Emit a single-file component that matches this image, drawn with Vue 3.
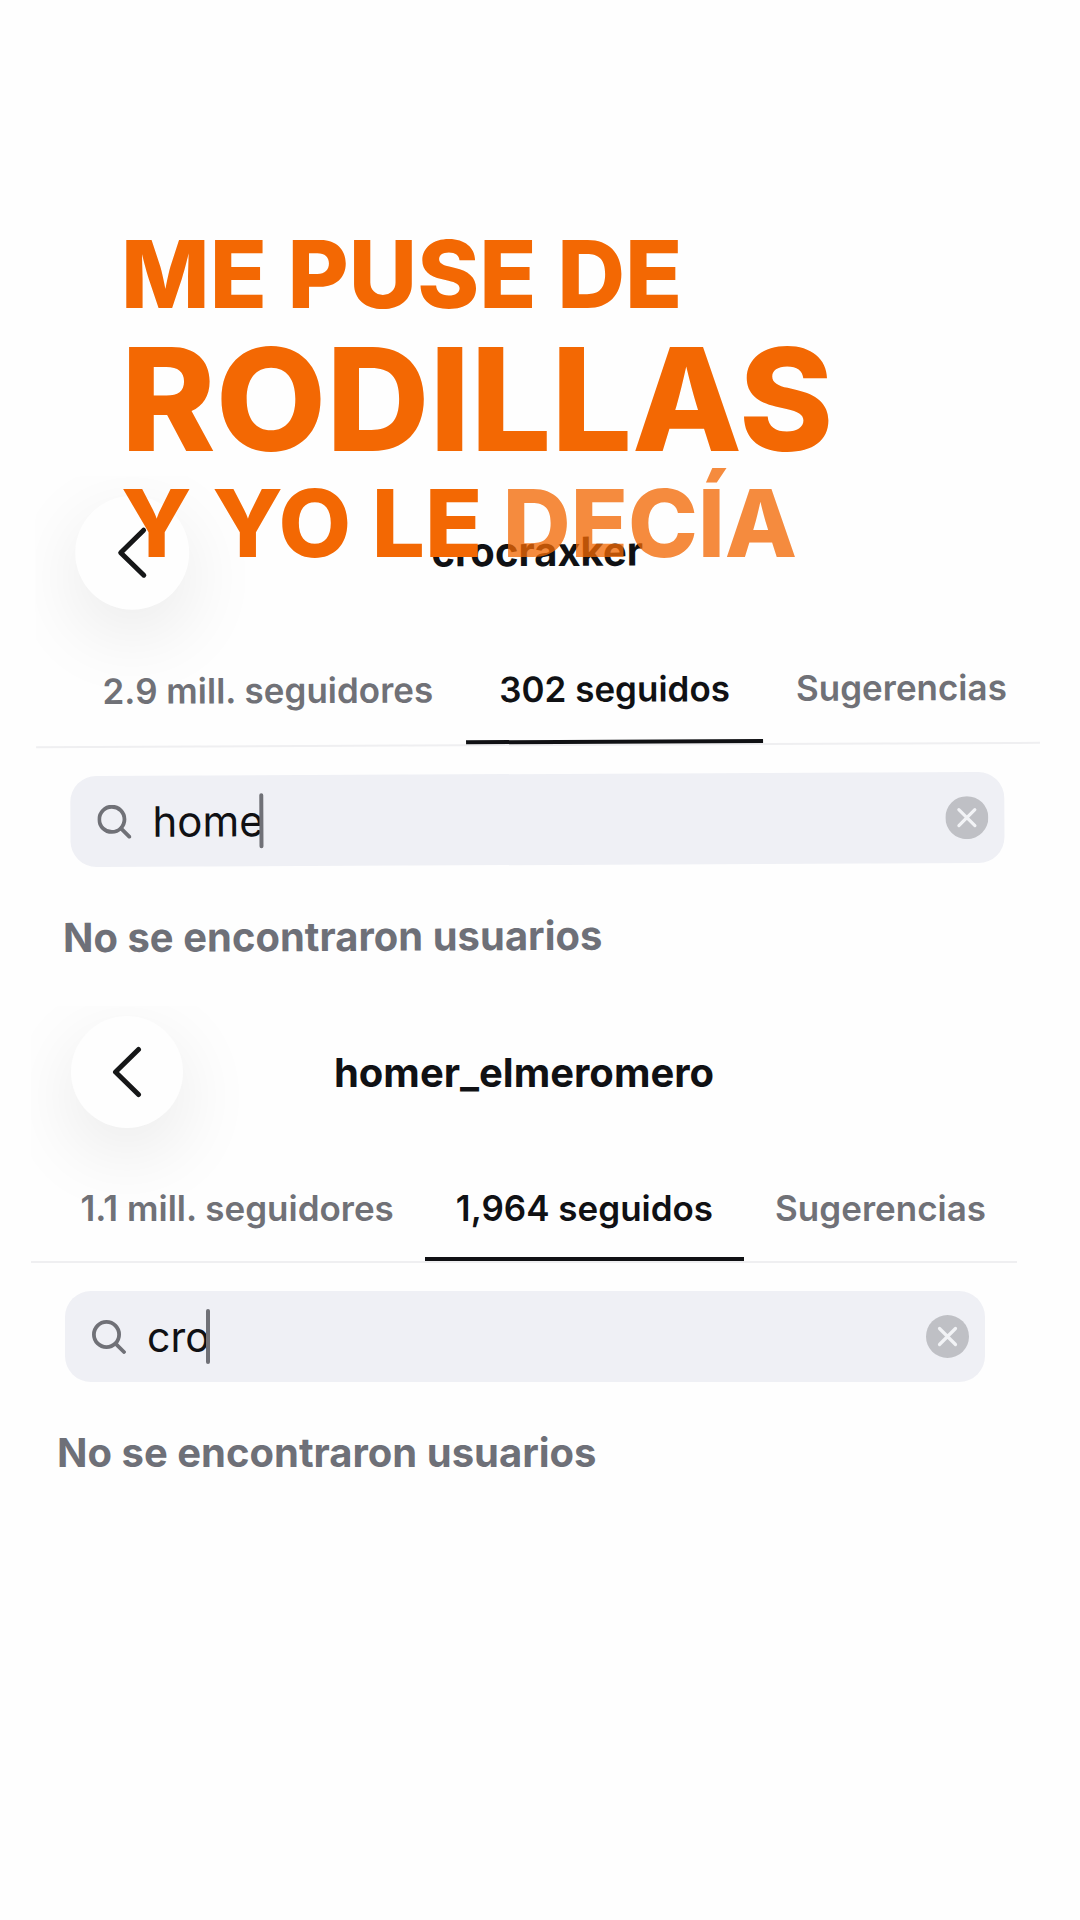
<template>
    <main class="page">
        <h1 class="caption">
            <span class="caption-line">ME PUSE DE</span>
            <span class="caption-line big">RODILLAS</span>
            <span class="caption-line">Y YO LE <span class="fading">DECÍA</span></span>
        </h1>

        <section v-for="profile in profiles" :key="profile.name" :class="['profile', profile.variant]">
            <header class="profile-header">
                <button class="back" type="button" aria-label="Atrás">
                    <svg class="back-icon" viewBox="0 0 30 52" fill="none" stroke="#161718" stroke-width="5"
                        stroke-linecap="round" stroke-linejoin="round">
                        <path d="M26.500 3.500 L3.500 26 L26.500 48.500" />
                    </svg>
                </button>
                <h2 class="name">{{ profile.name }}</h2>
            </header>

            <nav class="tabs">
                <button v-for="tab in profile.tabs" :key="tab" type="button"
                    :class="['tab', { active: profile.active === tab }]" @click="profile.active = tab">
                    {{ tab }}
                </button>
            </nav>

            <div class="search">
                <label class="search-label">
                    <svg class="search-icon" viewBox="0 0 34 34" fill="none" stroke="#707177" stroke-width="3.8"
                        stroke-linecap="round">
                        <circle cx="14.500" cy="14.500" r="12.600" />
                        <path d="M23.800 23.800 L32 32" />
                    </svg>
                    <input v-model="profile.query" class="search-input" type="text" aria-label="Buscar" />
                    <span class="caret" />
                </label>
                <button class="clear" type="button" aria-label="Borrar" @click="profile.query = ''">
                    <svg class="clear-icon" viewBox="0 0 43 43" fill="none">
                        <circle cx="21.500" cy="21.500" r="21.500" fill="#bfc0c5" />
                        <path d="M13.500 13.500 L29.500 29.500 M29.500 13.500 L13.500 29.500" stroke="#f2f3f6"
                            stroke-width="3.2" stroke-linecap="round" />
                    </svg>
                </button>
            </div>

            <p class="empty">No se encontraron usuarios</p>
        </section>
    </main>
</template>

<script setup>
import { reactive } from 'vue'

const profiles = reactive([
    {
        name: 'crocraxker',
        variant: 'tilted',
        tabs: ['2.9 mill. seguidores', '302 seguidos', 'Sugerencias'],
        active: '302 seguidos',
        query: 'home'
    },
    {
        name: 'homer_elmeromero',
        variant: 'straight',
        tabs: ['1.1 mill. seguidores', '1,964 seguidos', 'Sugerencias'],
        active: '1,964 seguidos',
        query: 'cro'
    }
])
</script>

<style>
body {
    background: #fefefe;
}
</style>

<style scoped>
.page {
    position: relative;
    min-height: 100vh;
    box-sizing: border-box;
    padding-top: 474px;
    font-family: Inter, "Liberation Sans", sans-serif;
    color: #101114;
}

/* el texto va encima de las capturas */
.caption {
    position: absolute;
    top: 216px;
    left: 121px;
    z-index: 2;
    margin: 0;
    font-weight: 800;
    color: #f36803;
    pointer-events: none;
}

.caption-line {
    display: block;
    font-size: 94px;
    line-height: 116px;
    white-space: nowrap;
}

.caption-line.big {
    font-size: 143px;
    line-height: 133px;
}

.fading {
    opacity: 0.76;
}

.profile {
    overflow: hidden;
    box-sizing: border-box;
}

.profile.tilted {
    --circle: 114px;
    --tab-height: 100px;
    --tab-gap: 33px;
    --search-end: 36px;
    --input-size: 42px;
    margin: 0 40px 0 36px;
    padding: 20px 0 30px;
    transform: rotate(-0.25deg);
}

.profile.straight {
    --circle: 112px;
    --tab-height: 97px;
    --tab-gap: 31px;
    --search-end: 32px;
    --input-size: 41px;
    margin: 14px 63px 0 31px;
    padding: 10px 0 30px;
}

.profile-header {
    display: grid;
    grid-template-columns: var(--circle) 1fr var(--circle);
    align-items: center;
    padding: 0 40px;
}

.back {
    display: flex;
    align-items: center;
    justify-content: center;
    width: var(--circle);
    height: var(--circle);
    padding: 0;
    border: none;
    border-radius: 50%;
    background: #fefefe;
    box-shadow: 0 24px 80px rgba(0, 0, 0, 0.09);
    cursor: pointer;
}

.back-icon {
    width: 30px;
    height: 52px;
}

.name {
    margin: 0;
    font-size: 40px;
    font-weight: 700;
    text-align: center;
}

.tabs {
    display: flex;
    justify-content: flex-end;
    margin-top: 36px;
    border-bottom: 2px solid #efeff1;
}

.tab {
    height: var(--tab-height);
    padding: 0 var(--tab-gap) 6px;
    border: none;
    border-bottom: 4px solid transparent;
    background: none;
    font-family: inherit;
    font-size: 35px;
    font-weight: 600;
    color: #707177;
    white-space: nowrap;
    cursor: pointer;
}

.tab.active {
    border-bottom-color: #101114;
    color: #101114;
}

.search {
    display: flex;
    align-items: center;
    height: 91px;
    margin: 28px var(--search-end) 0 34px;
    padding: 0 16px 0 27px;
    box-sizing: border-box;
    border-radius: 26px;
    background: #eff0f5;
}

.search-label {
    display: flex;
    flex: 1;
    align-items: center;
    min-width: 0;
    cursor: text;
}

.search-icon {
    width: 34px;
    height: 34px;
    margin-right: 21px;
}

.search-input {
    field-sizing: content;
    padding: 0;
    border: none;
    outline: none;
    background: transparent;
    font-family: inherit;
    font-size: var(--input-size);
    color: #101114;
    caret-color: transparent;
}

.caret {
    width: 4px;
    height: 55px;
    margin-left: -4px;
    border-radius: 2px;
    background: #707177;
}

.clear {
    display: flex;
    padding: 0;
    border: none;
    background: none;
    cursor: pointer;
}

.clear-icon {
    width: 43px;
    height: 43px;
}

.empty {
    margin: 45px 26px 0;
    font-size: 40px;
    font-weight: 700;
    line-height: 52px;
    color: #6e7078;
}
</style>
